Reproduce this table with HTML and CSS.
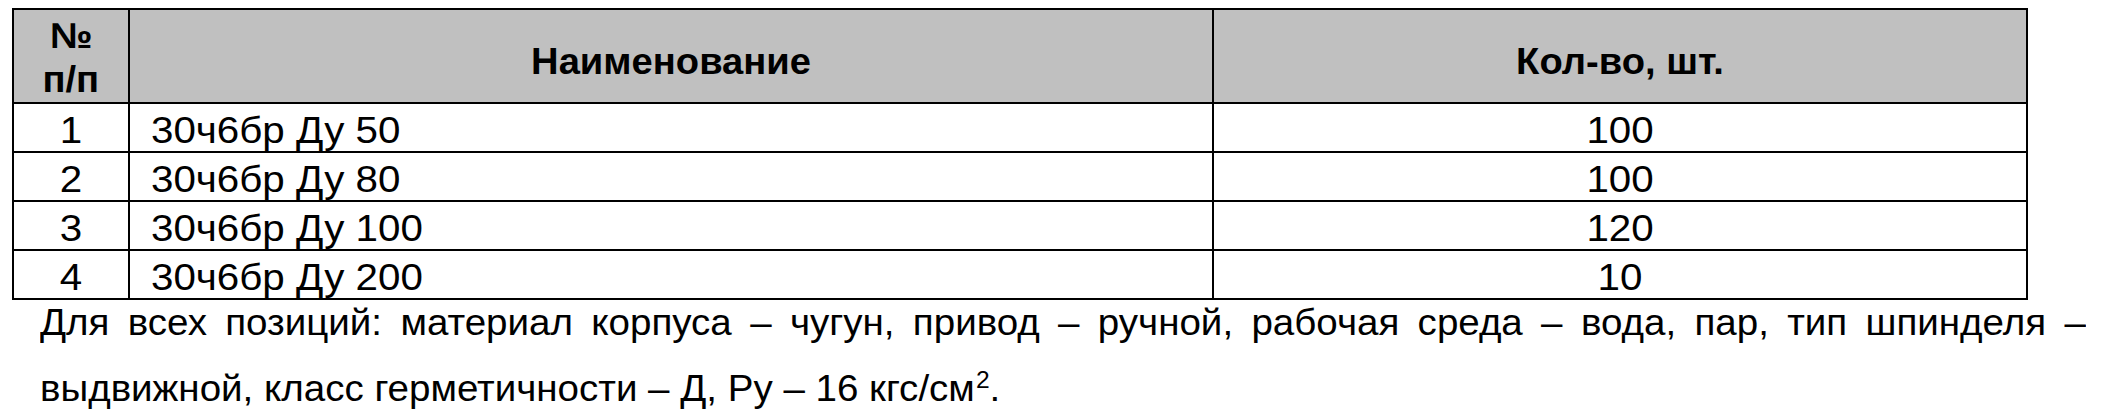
FILE: index.html
```html
<!DOCTYPE html>
<html lang="ru">
<head>
<meta charset="utf-8">
<title>Таблица</title>
<link rel="stylesheet" href="styles.css">
</head>
<body>
<div class="page">
  <div class="grid">
    <div class="cell head num"><span class="t">№</span><span class="t">п/п</span></div>
    <div class="cell head title"><span class="t">Наименование</span></div>
    <div class="cell head title"><span class="t">Кол-во, шт.</span></div>

    <div class="cell c"><span class="t">1</span></div>
    <div class="cell l"><span class="t">30ч6бр Ду 50</span></div>
    <div class="cell c"><span class="t">100</span></div>

    <div class="cell c"><span class="t">2</span></div>
    <div class="cell l"><span class="t">30ч6бр Ду 80</span></div>
    <div class="cell c"><span class="t">100</span></div>

    <div class="cell c"><span class="t">3</span></div>
    <div class="cell l"><span class="t">30ч6бр Ду 100</span></div>
    <div class="cell c"><span class="t">120</span></div>

    <div class="cell c"><span class="t">4</span></div>
    <div class="cell l"><span class="t">30ч6бр Ду 200</span></div>
    <div class="cell c"><span class="t">10</span></div>
  </div>
  <p class="note">Для всех позиций: материал корпуса – чугун, привод – ручной, рабочая среда – вода, пар, тип шпинделя – выдвижной, класс герметичности – Д, Ру – 16 кгс/см<sup class="sq">2</sup>.</p>
</div>
</body>
</html>
```

FILE: styles.css
```css
html, body {
  margin: 0;
  padding: 0;
  background: #ffffff;
}

body {
  font-family: "Liberation Sans", Arial, sans-serif;
  color: #000000;
}

.page {
  padding: 8px 0 0 0;
}

.grid {
  margin-left: 12px;
  width: 2016px;
  box-sizing: border-box;
  display: grid;
  grid-template-columns: 114px 1082px 812px;
  grid-template-rows: 92px repeat(4, 47px);
  gap: 2px;
  padding: 2px;
  background: #000000;
}

.cell {
  background: #ffffff;
  font-size: 36px;
  line-height: 40px;
  padding-top: 7px;
  box-sizing: border-box;
  white-space: nowrap;
}

.cell .t {
  display: inline-block;
  transform: scaleX(1.12);
  transform-origin: 50% 50%;
}

.cell.c {
  text-align: center;
}

.cell.l {
  padding-left: 21px;
}

.cell.l .t {
  transform-origin: 0 50%;
}

.cell.head {
  background: #c0c0c0;
  font-weight: bold;
  font-size: 36px;
  text-align: center;
}

.cell.head .t {
  transform: scaleX(1.06);
}

.cell.head.num {
  display: flex;
  flex-direction: column;
  align-items: center;
  line-height: 44px;
  padding-top: 4px;
}

.cell.head.title {
  line-height: 40px;
  padding-top: 32px;
}

.note {
  margin: -10px 0 0 40px;
  padding: 0;
  width: 1912px;
  font-size: 36px;
  line-height: 66px;
  text-align: justify;
  text-align-last: left;
  transform: scaleX(1.07);
  transform-origin: 0 0;
}

.note .sq {
  font-size: 23px;
  line-height: 1;
  vertical-align: 13px;
  margin-left: 1px;
}
```
